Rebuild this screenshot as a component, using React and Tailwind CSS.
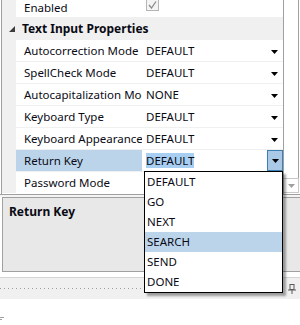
import React from "react";

const rows = [
  { name: "Autocorrection Mode", value: "DEFAULT" },
  { name: "SpellCheck Mode", value: "DEFAULT" },
  { name: "Autocapitalization Mode", value: "NONE" },
  { name: "Keyboard Type", value: "DEFAULT" },
  { name: "Keyboard Appearance", value: "DEFAULT" },
  { name: "Return Key", value: "DEFAULT", selected: true },
  { name: "Password Mode", value: "", last: true },
];

const options = ["DEFAULT", "GO", "NEXT", "SEARCH", "SEND", "DONE"];

function Arrow({ color = "#000" }) {
  return (
    <svg width="7" height="4" viewBox="0 0 7 4" className="block">
      <polygon points="0,0 7,0 3.5,4" fill={color} />
    </svg>
  );
}

function PropRow({ name, value, selected, last }) {
  return (
    <div
      className={
        "flex " +
        (last ? "h-[21px]" : "h-[22px] border-b border-[#f0f0f0]")
      }
    >
      <div className="w-[14px] shrink-0 bg-[#f0f0f0]" />
      <div
        className={
          "w-[126px] shrink-0 overflow-hidden whitespace-nowrap pl-[8px] leading-[21px] " +
          (selected ? "bg-[#bcd4ea]" : "")
        }
      >
        {name}
      </div>
      <div className="w-[1px] shrink-0 bg-white" />
      <div className="flex w-[140px] shrink-0 items-center pl-[3px]">
        {value && (
          <span
            className={
              "leading-[15px] " + (selected ? "bg-[#a8cff2]" : "")
            }
          >
            {value}
          </span>
        )}
        <div className="flex-1" />
        {value &&
          (selected ? (
            <div className="flex h-[21px] w-[16px] items-center justify-center border border-[#3c7fb1] bg-[#a9c9e6]">
              <Arrow />
            </div>
          ) : (
            <div className="mr-[5px] mt-[2px]">
              <Arrow />
            </div>
          ))}
      </div>
    </div>
  );
}

export default function App() {
  return (
    <div className="relative h-[325px] w-[300px] overflow-hidden bg-white font-['Noto_Sans',sans-serif] text-[11.5px] text-[#0a0a14]">
      <div className="flex h-[194px]">
        <div className="ml-[1px] w-[283px] border-l border-r border-[#a0a0a0]">
          <div className="flex h-[18px] border-b border-[#f0f0f0]">
            <div className="w-[14px] shrink-0 bg-[#f0f0f0]" />
            <div className="w-[126px] shrink-0 pl-[8px] leading-[15px]">Enabled</div>
            <div className="w-[1px] shrink-0" />
            <div className="flex w-[140px] items-start pl-[3px]">
              <div className="-mt-[2px] flex h-[13px] w-[13px] items-center justify-center border border-[#b5b5b5] bg-[#f4f4f4]">
                <svg width="9" height="8" viewBox="0 0 9 8">
                  <polyline points="1,4 3.5,7 8,0.5" fill="none" stroke="#8a8a8a" strokeWidth="1.3" />
                </svg>
              </div>
            </div>
          </div>
          <div className="flex h-[22px] items-center border-b border-[#f0f0f0] bg-[#f0f0f0]">
            <div className="flex w-[20px] shrink-0 justify-end pr-[7px] pt-[1px]">
              <svg width="6" height="6" viewBox="0 0 6 6" className="block">
                <polygon points="6,0 6,6 0,6" fill="#3c3c3c" />
              </svg>
            </div>
            <span className="text-[12px] font-bold leading-[21px]">Text Input Properties</span>
          </div>
          {rows.map((r) => (
            <PropRow key={r.name} {...r} />
          ))}
        </div>
        <div className="flex w-[15px] flex-col">
          <div className="h-[178px] border-r border-[#a0a0a0]" />
          <div className="flex h-[15px] items-center justify-center border border-l-0 border-[#c8c8c8] bg-white">
            <Arrow color="#a0a0a0" />
          </div>
        </div>
      </div>
      <div className="h-[1px] bg-[#a0a0a0]" />
      <div className="h-[2px] bg-[#f4f4f4]" />
      <div className="ml-[2px] h-[75px] border-l border-t border-b border-[#a0a0a0] bg-[#e8e8e8] pl-[6px] pt-[6px]">
        <div className="text-[12px] font-bold leading-[16px]">Return Key</div>
      </div>
      <div className="h-[5px] bg-white" />
      <div className="flex h-[22px] items-center border-t border-[#d5d5d5] bg-[#f0f0f0]">
        <div className="h-[1px] flex-1 bg-[repeating-linear-gradient(90deg,#9a9a9a_0_1px,transparent_1px_4px)]" />
        <div className="flex w-[16px] justify-center">
          <svg width="8" height="10" viewBox="0 0 8 10" className="block">
            <rect x="2" y="0.5" width="4" height="5" fill="none" stroke="#5a5a5a" />
            <line x1="0" y1="6" x2="8" y2="6" stroke="#5a5a5a" />
            <line x1="4" y1="6" x2="4" y2="10" stroke="#5a5a5a" />
          </svg>
        </div>
      </div>
      <div className="mt-[18px]">
        <svg width="4" height="4" viewBox="0 0 4 4" className="block">
          <line x1="0" y1="0.5" x2="4" y2="0.5" stroke="#a0a0a0" />
          <line x1="0" y1="2.5" x2="2" y2="2.5" stroke="#a0a0a0" />
        </svg>
      </div>
      <div className="absolute left-[144px] top-[171px] w-[139px] border border-black bg-white shadow-[3px_3px_2px_rgba(0,0,0,0.35)]">
        {options.map((o) => (
          <div
            key={o}
            className={
              "h-[20px] pl-[2px] leading-[20px] " +
              (o === "SEARCH" ? "bg-[#bcd4ea]" : "")
            }
          >
            {o}
          </div>
        ))}
      </div>
    </div>
  );
}
